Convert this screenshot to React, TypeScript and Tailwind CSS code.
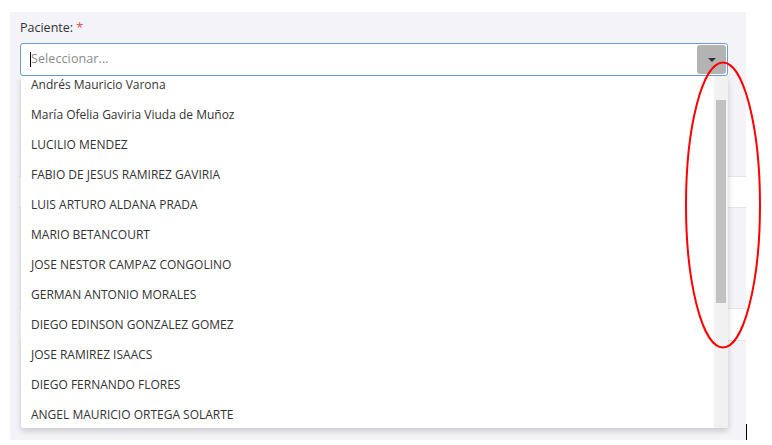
import React from "react";

const names = [
  "María Ofelia Gaviria Viuda de Muñoz",
  "LUCILIO MENDEZ",
  "FABIO DE JESUS RAMIREZ GAVIRIA",
  "LUIS ARTURO ALDANA PRADA",
  "MARIO BETANCOURT",
  "JOSE NESTOR CAMPAZ CONGOLINO",
  "GERMAN ANTONIO MORALES",
  "DIEGO EDINSON GONZALEZ GOMEZ",
  "JOSE RAMIREZ ISAACS",
  "DIEGO FERNANDO FLORES",
  "ANGEL MAURICIO ORTEGA SOLARTE",
];

export default function App() {
  return (
    <div
      className="relative w-[772px] h-[445px] bg-white overflow-hidden pl-[10px] pt-[12px]"
      style={{ fontFamily: '"Open Sans", "Noto Sans", sans-serif' }}
    >
      <div className="relative w-[736px] h-[428px] bg-[#f4f4f8] pl-[10px] pr-[18px] pt-[8px]">
        <div className="text-[12.5px] leading-[16px] text-[#333]">
          Paciente: <span className="text-[#d9534f]">*</span>
        </div>
        <div className="relative mt-[7px]">
          <div className="flex items-center h-[33px] bg-white border border-[#6a9fd4] rounded-[3px] pl-[9px] pr-[1px]">
            <div className="w-px h-[15px] bg-black" />
            <span className="flex-1 text-[12.5px] text-[#8a8a8a] tracking-[0.1px]">Seleccionar...</span>
            <div className="w-[29px] h-[29px] bg-[#b3b3b3] rounded-[3px] flex items-center justify-center">
              <div className="w-0 h-0 border-l-[4px] border-r-[4px] border-t-[4px] border-l-transparent border-r-transparent border-t-[#333]" />
            </div>
          </div>
          {/* dropdown list */}
          <div className="absolute left-[1px] right-0 top-[33px] h-[352px] bg-white z-20 shadow-[0_3px_6px_rgba(0,0,0,0.18)] rounded-b-[3px] flex overflow-hidden">
            <div className="flex-1 overflow-hidden pl-[10px] text-[12px] text-[#333]">
              <div className="h-[16px] leading-[16px] mt-[1px]">Andrés Mauricio Varona</div>
              {names.map((n) => (
                <div key={n} className="h-[30px] flex items-center pt-[14px]">
                  {n}
                </div>
              ))}
            </div>
            <div className="w-[14px] h-full bg-[#f1f1f1] pt-[24px] px-[2px]">
              <div className="w-full h-[203px] bg-[#c1c1c1]" />
            </div>
          </div>
        </div>
        {/* form content behind dropdown */}
        <div className="mt-[100px] -mr-[18px] h-[32px] bg-white border-y border-[#e3e3e8]" />
        <div className="mt-[100px] -mr-[18px] h-[33px] bg-white border-y border-[#e3e3e8]" />
        <div className="mt-[71px] pl-[10px] text-[12.5px] leading-[16px] text-[#333]">Agregar</div>
      </div>
      <div className="absolute left-[746px] top-[424px] w-px h-[16px] bg-black" />
      <svg className="absolute left-0 top-0 z-30 pointer-events-none" width="772" height="445">
        <ellipse cx="723" cy="205" rx="37" ry="142.5" fill="none" stroke="#ff0000" strokeWidth="2" />
      </svg>
    </div>
  );
}
